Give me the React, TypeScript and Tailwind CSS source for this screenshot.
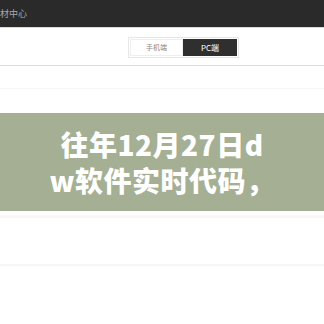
export default function App() {
  return (
    <div className="w-[324px] h-[324px] overflow-hidden bg-white font-['Noto_Sans_CJK_SC','Noto_Sans',sans-serif]">
      <div className="h-[27px] bg-[#2a2a2a] flex items-center">
        <span className="text-[9px] text-[#a8a8a8] leading-none">材中心</span>
      </div>
      <div className="h-[1px] bg-[#d9d9d9]" />

      <div className="h-[37px] flex items-start justify-end pr-[85px] pt-[9px]">
        <div className="flex border border-[#e6e6e6] p-[1px] bg-white">
          <div className="w-[53px] h-[17px] flex items-center justify-center border border-[#eeeeee] text-[7px] text-[#8a8a8a]">
            手机端
          </div>
          <div className="w-[54px] h-[17px] flex items-center justify-center bg-[#2f2f2f] text-[8px] text-white">
            PC端
          </div>
        </div>
      </div>
      <div className="h-[1px] bg-[#dcdcdc]" />

      <div className="h-[22px]" />
      <div className="h-[1px] bg-[#f6f6f6]" />
      <div className="h-[24px]" />

      <div className="h-[98px] bg-[#a4af94] flex flex-col items-center justify-center">
        <p className="text-[28px] font-black leading-[36px] text-white text-center tracking-[0.5px]">
          <span className="block">往年12月27日d</span>
          <span className="block">w软件实时代码，</span>
        </p>
      </div>

      <div className="h-[4px]" />
      <div className="h-[3px] bg-[#f8f8f8]" />
      <div className="h-[46px]" />
      <div className="h-[2px] bg-[#f6f6f6]" />
    </div>
  );
}
